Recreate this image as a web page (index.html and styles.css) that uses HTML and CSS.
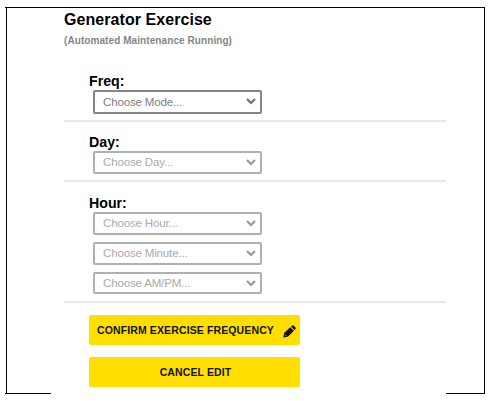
FILE: index.html
```html
<!DOCTYPE html>
<html lang="en">
<head>
    <meta charset="UTF-8">
    <meta name="viewport" content="width=device-width, initial-scale=1.0">
    <title>Generator Exercise</title>
    <link rel="stylesheet" href="styles.css">
</head>
<body>

<div class="frame">
    <div class="frame-inner">
        <div class="panel">
            <h2>Generator Exercise</h2>
            <p class="status">(Automated Maintenance Running)</p>

            <form>
                <div class="group group-freq">
                    <label for="freq">Freq:</label>
                    <div class="select-box">
                        <select id="freq"><option>Choose Mode...</option></select>
                        <svg class="arrow" viewBox="0 0 10 8"><path d="M1 2l4 4 4-4"/></svg>
                    </div>
                </div>

                <div class="group group-day disabled">
                    <label for="day">Day:</label>
                    <div class="select-box">
                        <select id="day"><option>Choose Day...</option></select>
                        <svg class="arrow" viewBox="0 0 10 8"><path d="M1 2l4 4 4-4"/></svg>
                    </div>
                </div>

                <div class="group group-hour disabled">
                    <label for="hour">Hour:</label>
                    <div class="select-box">
                        <select id="hour"><option>Choose Hour...</option></select>
                        <svg class="arrow" viewBox="0 0 10 8"><path d="M1 2l4 4 4-4"/></svg>
                    </div>
                    <div class="select-box">
                        <select id="minute"><option>Choose Minute...</option></select>
                        <svg class="arrow" viewBox="0 0 10 8"><path d="M1 2l4 4 4-4"/></svg>
                    </div>
                    <div class="select-box">
                        <select id="ampm"><option>Choose AM/PM...</option></select>
                        <svg class="arrow" viewBox="0 0 10 8"><path d="M1 2l4 4 4-4"/></svg>
                    </div>
                </div>

                <div class="buttons">
                    <button type="button" class="btn btn-confirm">
                        <span>CONFIRM EXERCISE FREQUENCY</span>
                        <svg class="pencil" viewBox="0 0 13 13">
                            <path d="M0.3 12.6l.8-4.6L7.2 2.2l3.8 3.6-6.2 6z"/>
                            <path d="M7.9 1.6L9.2.5q.8-.5 1.5.1l1.8 1.8q.6.8 0 1.5L11.6 5.1z"/>
                            <path class="tip" d="M1.9 9.6l1.5 1.5"/>
                        </svg>
                    </button>
                    <button type="button" class="btn btn-cancel"><span>CANCEL EDIT</span></button>
                </div>
            </form>
        </div>
    </div>
</div>

</body>
</html>
```

FILE: styles.css
```css
* { margin: 0; padding: 0; box-sizing: border-box; font-family: "Liberation Sans", Arial, sans-serif; }
body { background: #fff; height: 401px; overflow: hidden; }

.frame {
    width: 480px; height: 387px; margin: 7px 0 0 5px;
    border-top: 1px solid #000; border-bottom: 1px solid #000;
}
.frame-inner {
    height: 385px; margin-left: 1px;
    border-left: 1px solid #000; border-right: 1px solid #000;
}
/* runs over the bottom line of the frame */
.panel {
    width: 395px; height: 392px; margin-left: 44px; padding: 2px 0 0 13px;
    background: #fff; position: relative;
}

h2 { font-size: 16px; line-height: 20px; letter-spacing: 0.06px; color: #000; }
.status {
    margin-top: 4px; font-size: 10px; line-height: 14px; font-weight: bold;
    letter-spacing: 0.08px; color: #858585;
}

.group { padding-left: 25px; border-bottom: 2px solid #e8e8e8; }
.group label {
    display: block; font-size: 14.2px; line-height: 17px; font-weight: bold; color: #000;
}
.group-freq { height: 49px; margin-top: 25px; }
.group-day { height: 60px; padding-top: 12px; }
.group-hour { height: 121px; padding-top: 13px; }

.select-box { position: relative; width: 169px; height: 23px; margin-left: 4px; }
.group-freq .select-box { height: 24px; }
.group-hour .select-box { margin-bottom: 7px; }
.group-hour .select-box:last-child { height: 22px; }
.select-box select {
    display: block; width: 100%; height: 100%; padding: 0 0 1px 8px;
    appearance: none; background: #fff; border: 2px solid #858585; border-radius: 2px;
    font-size: 11.5px; letter-spacing: -0.15px; color: #808080;
}
.disabled .select-box select { border-color: #b0b0b0; color: #aaa; }
.arrow {
    position: absolute; right: 6px; top: 7px; width: 10px; height: 8px;
    fill: none; stroke: #707070; stroke-width: 2.2;
}
.disabled .arrow { stroke: #999; }

.buttons { display: flex; flex-direction: column; gap: 12px; padding: 12px 0 0 25px; }
.btn {
    display: flex; align-items: center; justify-content: center;
    width: 211px; height: 30px; border: none; border-radius: 2px;
    background: #ffde00; color: #111; font-size: 10.5px; font-weight: bold;
    letter-spacing: 0.12px;
}
.btn-cancel { padding-left: 2px; }
.btn-confirm { justify-content: space-between; padding: 0 4px 0 8px; }
.pencil { width: 13px; height: 13px; margin-top: 2px; fill: #111; }
.tip { fill: none; stroke: #ffde00; stroke-width: 0.7; }
```
